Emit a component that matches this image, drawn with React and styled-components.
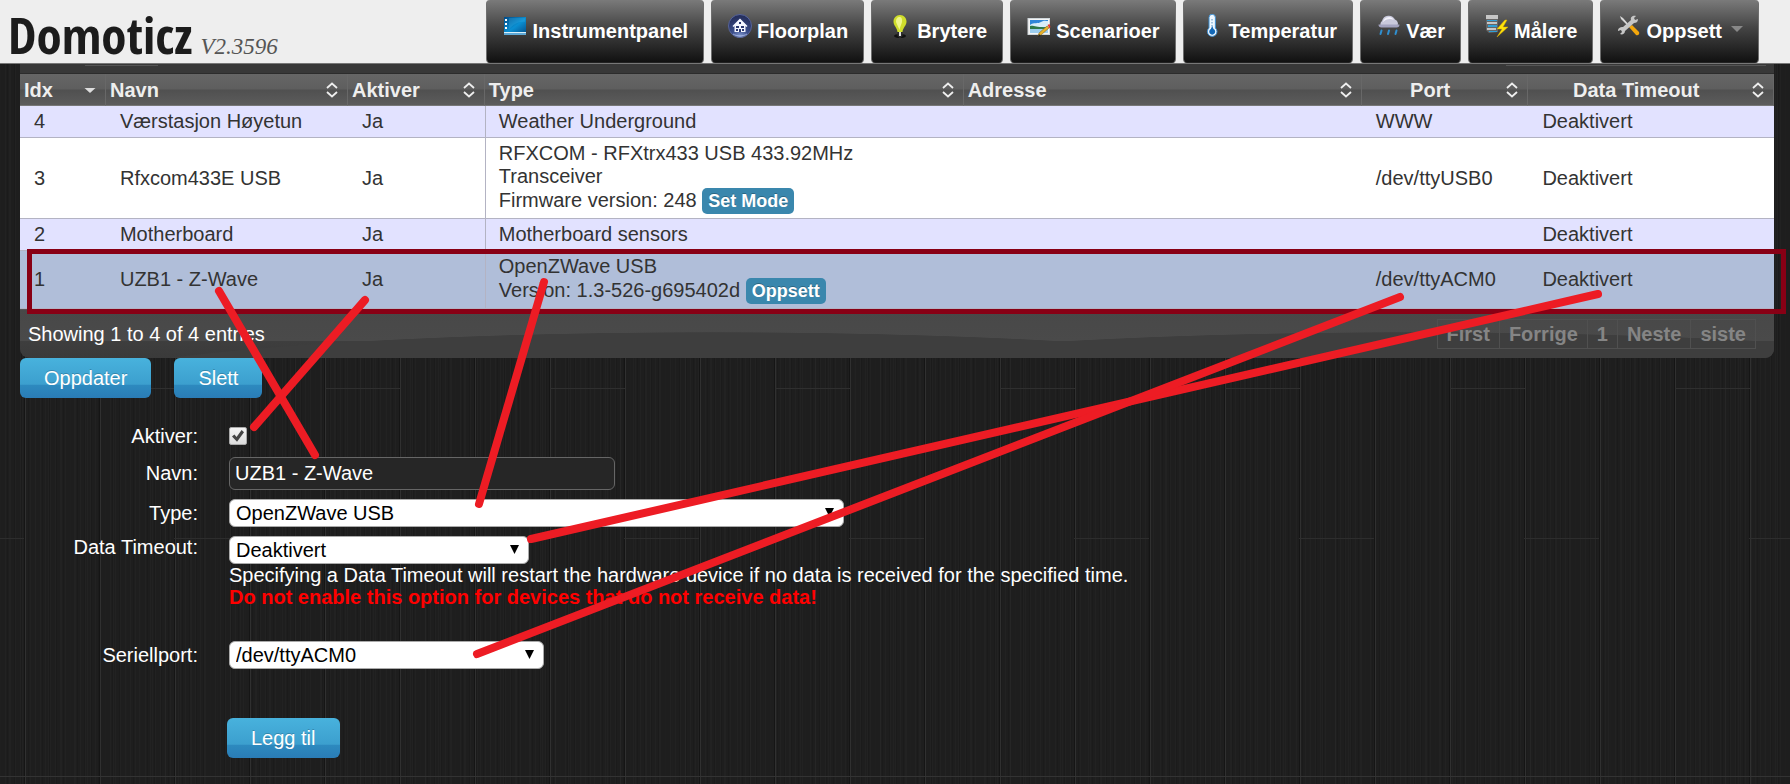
import React, { Component } from 'react'
import styled, { createGlobalStyle, css } from 'styled-components';

const GlobalStyle = createGlobalStyle`
  * {
    box-sizing: border-box;
  }
  body {
    margin: 0;
    color: #fff;
    font-family: "Liberation Sans", Arial, sans-serif;
    font-size: 20px;
    line-height: 23px;
    background-color: #1e1e1e;
    /* dark wood: plank ends, plank seams, grain */
    background-image:
      linear-gradient(90deg, transparent 100px, #2f2f2f 100px, #2f2f2f 175px, transparent 175px),
      linear-gradient(90deg, transparent 174px, #2d2d2d 174px),
      linear-gradient(90deg, #2d2d2d 24px, transparent 24px),
      repeating-linear-gradient(90deg, transparent 0, transparent 24px, #151515 24px, #151515 25px, #303030 25px, #303030 26px, transparent 26px, transparent 75px),
      repeating-linear-gradient(90deg, rgba(255, 255, 255, 0.02) 0, rgba(255, 255, 255, 0.02) 1px, transparent 1px, transparent 5px),
      repeating-linear-gradient(90deg, rgba(0, 0, 0, 0.1) 0, rgba(0, 0, 0, 0.1) 1px, transparent 1px, transparent 7px),
      repeating-linear-gradient(90deg, transparent 0, transparent 9px, rgba(255, 255, 255, 0.02) 9px, rgba(255, 255, 255, 0.02) 10px, transparent 10px, transparent 13px);
    background-size: 225px 1px, 225px 1px, 225px 1px, auto, auto, auto, auto;
    background-position: 0 388px, 0 538px, 0 538px, 0 0, 0 0, 0 0, 0 0;
    background-repeat: repeat-x, repeat-x, repeat-x, repeat, repeat, repeat, repeat;
  }
`;

const Page = styled.div`
  position: relative;
  min-height: 100vh;
`;

const Header = styled.header`
  display: flex;
  justify-content: space-between;
  height: 64px;
  padding: 0 31px 0 8px;
  background: #eee;
  border-bottom: 1px solid #777;
`;

const Brand = styled.a`
  display: flex;
  align-items: baseline;
  gap: 8px;
  color: #1c1c1c;
  text-decoration: none;
`;

const BrandName = styled.span`
  font-family: "Open Sans Condensed", "Roboto Condensed", sans-serif;
  font-size: 51px;
  font-weight: bold;
  line-height: 68px;
`;

const Version = styled.span`
  color: #555;
  font-family: "Liberation Serif", serif;
  font-size: 23px;
  font-style: italic;
`;

const Nav = styled.nav`
  display: flex;
  gap: 7px;
`;

const NavTab = styled.a`
  display: flex;
  align-items: baseline;
  gap: 5px;
  height: 63px;
  padding: 14px 15px 0 16px;
  border: 1px solid #6e6e6e;
  border-top: 0;
  border-bottom-color: #222;
  border-radius: 4px;
  background: linear-gradient(#7a7a7a, #444 45%, #111);
  color: #fff;
  font-weight: bold;
  text-decoration: none;
`;

const Caret = styled.span`
  align-self: flex-start;
  width: 12px;
  height: 6px;
  margin: 12px 0 0 4px;
  background: #888;
  clip-path: polygon(0 0, 100% 0, 50% 100%);
`;

const Main = styled.main`
  padding: 0 16px 0 20px;
`;

const PanelTop = styled.div`
  display: flex;
  justify-content: space-between;
  height: 10px;
  padding: 1px 8px 0 65px;
  background: #383838;
  border-bottom: 1px solid #2c2c2c;
`;

const Edge = styled.span`
  width: ${props => props.$wide ? '260px' : '73px'};
  height: 1px;
  background: #555;
`;

const Table = styled.table`
  width: 100%;
  table-layout: fixed;
  border-spacing: 0;
  color: #333;
`;

const Th = styled.th`
  height: 32px;
  padding: 1px 15px 0 4px;
  border-right: 1px solid #686868;
  border-bottom: 1px solid #777;
  background: linear-gradient(#666 0, #5e5e5e 48%, #505050 52%, #5c5c5c);
  color: #eee;
`;

const ThInner = styled.div`
  display: flex;
  align-items: center;
  justify-content: space-between;
  margin-right: -6px;
`;

const ThText = styled.span`
  flex: 1;
  text-align: ${props => props.$center ? 'center' : 'left'};
  padding-right: ${props => props.$center ? '12px' : '0'};
`;

const Row = styled.tr`
  background: ${props => props.$selected ? '#b0bed9' : props.$odd ? '#fff' : '#e2e2ff'};
`;

const Td = styled.td`
  padding: 4px 14px;
  border-bottom: 1px solid #b3b3c3;
  ${props => props.$divider && css`
    padding-left: 13px;
    border-left: 1px solid #b3b3c3;
  `}
`;

const Label = styled.button`
  padding: 3px 6px;
  border: 0;
  border-radius: 5px;
  background: #3a87ad;
  color: #fff;
  font: bold 18px/20px "Liberation Sans", Arial, sans-serif;
  text-shadow: 0 -1px 0 rgba(0, 0, 0, 0.25);
`;

const PanelBottom = styled.div`
  display: flex;
  align-items: center;
  justify-content: space-between;
  height: 49px;
  padding: 0 18px 0 8px;
  border-top: 1px solid #555;
  border-radius: 0 0 9px 9px;
  background:
    radial-gradient(664px 60px at 693px 82px, #3e3e3e 99%, transparent),
    radial-gradient(664px 60px at 1393px 82px, #3e3e3e 99%, transparent),
    linear-gradient(#484848, #4a4a4a 31px, #3e3e3e 31px, #3a3a3a);
`;

const Pager = styled.div`
  display: flex;
  border: 1px solid #505050;
`;

const PageButton = styled.button`
  height: 28px;
  padding: 0 9px;
  border: 0;
  border-left: 1px solid #505050;
  background: none;
  color: #858585;
  font: bold 20px/23px "Liberation Sans", Arial, sans-serif;

  &:first-child {
    border-left: 0;
  }
`;

const Button = styled.button`
  height: 40px;
  padding: 0 24px;
  border: 0;
  border-radius: 6px;
  background: linear-gradient(#48b2dd, #3c9fce 66%, #2d8abf 67%, #2a7cb6);
  color: #fff;
  font: 20px/23px "Liberation Sans", Arial, sans-serif;
  text-shadow: 0 -1px 0 rgba(0, 0, 0, 0.2);
`;

const Actions = styled.div`
  display: flex;
  gap: 23px;
`;

const Form = styled.form`
  display: grid;
  gap: 9px;
  padding-top: 26px;
`;

const Field = styled.div`
  display: grid;
  grid-template-columns: 178px 1fr;
  column-gap: 31px;
  align-items: ${props => props.$top ? 'start' : 'center'};
  margin-bottom: ${props => props.$last ? '40px' : '0'};
`;

const FieldLabel = styled.label`
  text-align: right;
`;

const Checkbox = styled.input`
  appearance: none;
  width: 18px;
  height: 18px;
  margin: 3px 0;
  border: 1px solid #aaa;
  border-radius: 2px;
  background: linear-gradient(#f4f4f4, #dcdcdc);

  &:checked::after {
    content: '';
    display: block;
    width: 12px;
    height: 12px;
    margin: 2px;
    background: #444;
    clip-path: polygon(0 55%, 20% 38%, 38% 58%, 80% 0, 100% 18%, 42% 98%);
  }
`;

const TextInput = styled.input`
  width: 386px;
  max-width: 100%;
  height: 33px;
  padding: 0 5px;
  border: 1px solid #666;
  border-radius: 6px;
  background: #262626;
  color: #fff;
  font: 20px/23px "Liberation Sans", Arial, sans-serif;
`;

const SelectBox = styled.div`
  position: relative;
  width: ${props => props.$width};
  max-width: 100%;
  height: 28px;

  &::after {
    content: '';
    position: absolute;
    top: 9px;
    right: 10px;
    width: 9px;
    height: 9px;
    background: #000;
    clip-path: polygon(0 0, 100% 0, 50% 100%);
    pointer-events: none;
  }
`;

const Select = styled.select`
  appearance: none;
  display: block;
  width: 100%;
  height: 28px;
  padding: 0 26px 0 6px;
  border: 1px solid #aaa;
  border-radius: 6px;
  background: #fff;
  color: #000;
  font: 20px/23px "Liberation Sans", Arial, sans-serif;
`;

const Help = styled.p`
  margin: 0 0 24px;
  line-height: 22px;
`;

const Warning = styled.strong`
  display: block;
  color: #f00;
`;

const Submit = styled.div`
  padding-left: 207px;
`;

const Rule = styled.hr`
  margin: 18px 0 0;
  border: 0;
  border-top: 1px solid #333;
`;

const Marks = styled.svg`
  position: absolute;
  top: 0;
  left: 0;
  width: 100%;
  height: 100%;
  pointer-events: none;
`;

const MarkBox = styled.rect`
  width: calc(100% - 36px);
  fill: none;
  stroke: #880015;
  stroke-width: 5px;
`;

const Icon = ({ children }) => (
  <svg width="24" height="24" viewBox="0 0 24 24" aria-hidden="true">{children}</svg>
)

const DashboardIcon = () => (
  <Icon>
    <defs>
      <linearGradient id="dash" x1="0" y1="0" x2="1" y2="1">
        <stop offset="0" stopColor="#034a86" />
        <stop offset="0.55" stopColor="#0a8fd2" />
        <stop offset="1" stopColor="#04528f" />
      </linearGradient>
    </defs>
    <rect x="1" y="3" width="22" height="16" fill="url(#dash)" />
    <rect x="1" y="18" width="22" height="1" fill="#d8f0fb" />
    <rect x="1" y="19" width="22" height="2" fill="#5fa9d6" />
    <path d="M2 5h2v2H2zM2 9h2v2H2zM2 13h2v2H2z" fill="#fff" />
    <path d="M6 4L22 4 22 8C16 7 11 10 6 15z" fill="#3fb8ec" opacity="0.25" />
  </Icon>
)

const FloorplanIcon = () => (
  <Icon>
    <defs>
      <radialGradient id="floor" cx="0.5" cy="1" r="0.9">
        <stop offset="0" stopColor="#8fa6dc" />
        <stop offset="0.4" stopColor="#3c4f8d" />
        <stop offset="1" stopColor="#26305e" />
      </radialGradient>
    </defs>
    <circle cx="12" cy="12" r="11.5" fill="url(#floor)" stroke="#58659a" />
    <path d="M4.500 12L12 4.500l7.500 7.500-1 1-1-1v6h-11v-6l-1 1z" fill="#f4f6ff" />
    <path d="M8 12h3v2H8zM13 12h3v2h-3zM8 15h2v2H8zM14 15h2v2h-2zM11 15h2v3h-2zM11 8h2v2h-2z" fill="#2b3870" />
    <path d="M5 20c4 2.500 10 2.500 14 0" stroke="#b8c6ee" strokeWidth="0.700" fill="none" />
  </Icon>
)

const BulbIcon = () => (
  <Icon>
    <ellipse cx="12" cy="22" rx="6" ry="2" fill="#111" />
    <path d="M12 1C8 1 5.500 4 5.500 7.500 5.500 12 9 13 9.500 18h5C15 13 18.500 12 18.500 7.500 18.500 4 16 1 12 1z" fill="#cfdd2b" />
    <path d="M12 3C9 3 8 5 8 8c1 3 2.500 5 3.500 8 1-5 3-7 2.500-10C14 4 13 3 12 3z" fill="#f0f68b" />
    <path d="M9.500 18h5v4l-2 2h-1l-2-2z" fill="#2b2b2b" />
    <path d="M11 18h2v4h-2z" fill="#ddd" />
  </Icon>
)

const ScenesIcon = () => (
  <Icon>
    <rect x="1" y="4.500" width="21.500" height="16" fill="#f5f5f5" stroke="#cfd6da" />
    <rect x="3" y="6" width="18" height="13" fill="#2f86d8" />
    <path d="M3 11c4-3 8-1 11-3s5-1 7-1v6H3z" fill="#d7edfa" />
    <path d="M3 12c4-1 7 2 18 1v2H3z" fill="#2f7a49" />
    <rect x="3" y="15" width="18" height="4" fill="#9ccdee" />
    <path d="M20 12l2 2-8 7-3 1 1-3z" fill="#e7b22b" stroke="#7a5a12" strokeWidth="0.500" />
    <path d="M20.500 11l2-1 1 3-1 1.500z" fill="#e23b2e" />
    <path d="M11 23l1-3 2 2z" fill="#222" />
  </Icon>
)

const TemperatureIcon = () => (
  <Icon>
    <path d="M9 3.500a3.200 3.200 0 0 1 6.400 0V14a4.800 4.800 0 1 1-6.400 0z" fill="#eef7ff" stroke="#3f8fd0" />
    <path d="M12 5v13" stroke="#8ab4d6" strokeWidth="1.500" strokeDasharray="1.500 1.500" />
    <path d="M12.200 12l1.300 3a3 3 0 1 1-2.600 0z" fill="#1268b8" />
  </Icon>
)

const RainIcon = () => (
  <Icon>
    <path d="M4.500 13a4 4 0 0 1 .5-6 7 7 0 0 1 13-1.500 4.500 4.500 0 0 1 1.500 7.500z" fill="#c9c9dc" />
    <path d="M6 8a6 6 0 0 1 11-2c-4-2-8-1-11 2z" fill="#f2f2fa" />
    <path d="M1.500 10.500h21c0 2-1 3-3 3h-15c-2 0-3-1-3-3z" fill="#a3a3c0" />
    <path d="M4.500 16.500L3.500 20M12 16.500L11 20M19.500 16.500l-1 3.500" stroke="#2f8fd0" strokeWidth="2" strokeLinecap="round" />
  </Icon>
)

const MetersIcon = () => (
  <Icon>
    <path d="M1 1h12v17l-9 1-3-3z" fill="#666" />
    <path d="M1 1h12v4H1zM2 8h10v2H2zM2 14h9v2H2z" fill="#c6c6c6" />
    <path d="M2 6h10v1H2zM3 11h9v2H3zM4 17h8v1H4z" fill="#2f9fd6" />
    <path d="M20 6l-8 9h5l-5 8 11-10h-5l4-7z" fill="#ffe40a" stroke="#d8a800" strokeWidth="0.500" />
  </Icon>
)

const SetupIcon = () => (
  <Icon>
    <path d="M3 2l3 2 7 8-1 1-8-8z" fill="#d8d8d8" />
    <path d="M12 13l3-2 7 7c1 2-1 4-3 3z" fill="#f4a70c" />
    <path d="M19 2l-2 2 1 2 3-1c0 3-2 4-4 4L8 17c0 3-3 4-5 3l2-2-1-2-3 1c0-3 2-4 5-4l8-7c-1-3 2-5 5-4z" fill="#c6c6c6" />
  </Icon>
)

const SortIcon = ({ desc }) => (
  <svg width="12" height="16" viewBox="0 0 12 16" aria-hidden="true">
    {desc
      ? <path d="M0.500 6h11L6 11z" fill="#ddd" />
      : <path d="M1 6L6 1.500 11 6M1 10L6 14.500 11 10" fill="none" stroke="#eee" strokeWidth="1.800" />}
  </svg>
)

const tabs = [
  { name: 'Instrumentpanel', icon: DashboardIcon },
  { name: 'Floorplan', icon: FloorplanIcon },
  { name: 'Brytere', icon: BulbIcon },
  { name: 'Scenarioer', icon: ScenesIcon },
  { name: 'Temperatur', icon: TemperatureIcon },
  { name: 'Vær', icon: RainIcon },
  { name: 'Målere', icon: MetersIcon },
  { name: 'Oppsett', icon: SetupIcon, menu: true },
]

const columns = [
  { name: 'Idx', width: '4.9%', desc: true },
  { name: 'Navn', width: '13.8%' },
  { name: 'Aktiver', width: '7.8%' },
  { name: 'Type', width: '27.3%' },
  { name: 'Adresse', width: '22.7%' },
  { name: 'Port', width: '9.5%', center: true },
  { name: 'Data Timeout', width: '14%', center: true },
]

const hardware = [
  { idx: 4, name: 'Værstasjon Høyetun', type: ['Weather Underground'], port: 'WWW' },
  { idx: 3, name: 'Rfxcom433E USB', type: ['RFXCOM - RFXtrx433 USB 433.92MHz', 'Transceiver', 'Firmware version: 248'], action: 'Set Mode', port: '/dev/ttyUSB0' },
  { idx: 2, name: 'Motherboard', type: ['Motherboard sensors'], port: '' },
  { idx: 1, name: 'UZB1 - Z-Wave', type: ['OpenZWave USB', 'Version: 1.3-526-g695402d'], action: 'Oppsett', port: '/dev/ttyACM0' },
]

// which table cell ends up in which form field
const links = [
  [219, 291, 315, 455],
  [365, 300, 254, 427],
  [544, 282, 479, 504],
  [1598, 294, 531, 539],
  [1400, 297, 477, 654],
]

export default class App extends Component {
  constructor() {
    super();
    this.state = {
      selected: 1,
      enabled: true,
      name: 'UZB1 - Z-Wave'
    }
    this.selectRow = this.selectRow.bind(this)
  }

  selectRow(item) {
    this.setState({ selected: item.idx, name: item.name })
  }

  render() {
    const { selected, enabled, name } = this.state
    return (
      <Page>
        <GlobalStyle />
        <Header>
          <Brand href="#/Dashboard">
            <BrandName>Domoticz</BrandName>
            <Version>V2.3596</Version>
          </Brand>
          <Nav>
            {tabs.map(tab => (
              <NavTab key={tab.name} href="#!">
                <tab.icon />
                <span>{tab.name}</span>
                {tab.menu && <Caret />}
              </NavTab>
            ))}
          </Nav>
        </Header>
        <Main>
          <PanelTop>
            <Edge />
            <Edge $wide />
          </PanelTop>
          <Table>
            <colgroup>
              {columns.map(col => <col key={col.name} width={col.width} />)}
            </colgroup>
            <thead>
              <tr>
                {columns.map(col => (
                  <Th key={col.name} scope="col">
                    <ThInner>
                      <ThText $center={col.center}>{col.name}</ThText>
                      <SortIcon desc={col.desc} />
                    </ThInner>
                  </Th>
                ))}
              </tr>
            </thead>
            <tbody>
              {hardware.map((item, i) => (
                <Row key={item.idx} $odd={i % 2 === 1} $selected={item.idx === selected} onClick={() => this.selectRow(item)}>
                  <Td>{item.idx}</Td>
                  <Td>{item.name}</Td>
                  <Td>Ja</Td>
                  <Td $divider>
                    {item.type.map((line, n) => (
                      <React.Fragment key={line}>
                        {n > 0 && <br />}
                        {line}
                      </React.Fragment>
                    ))}
                    {item.action && <> <Label type="button">{item.action}</Label></>}
                  </Td>
                  <Td></Td>
                  <Td>{item.port}</Td>
                  <Td>Deaktivert</Td>
                </Row>
              ))}
            </tbody>
          </Table>
          <PanelBottom>
            <span>Showing 1 to 4 of 4 entries</span>
            <Pager>
              {['First', 'Forrige', '1', 'Neste', 'siste'].map(page => (
                <PageButton key={page} type="button">{page}</PageButton>
              ))}
            </Pager>
          </PanelBottom>
          <Actions>
            <Button type="button">Oppdater</Button>
            <Button type="button">Slett</Button>
          </Actions>
          <Form onSubmit={e => e.preventDefault()}>
            <Field>
              <FieldLabel htmlFor="enabled">Aktiver:</FieldLabel>
              <Checkbox
                id="enabled"
                type="checkbox"
                checked={enabled}
                onChange={e => this.setState({ enabled: e.target.checked })}
              />
            </Field>
            <Field>
              <FieldLabel htmlFor="name">Navn:</FieldLabel>
              <TextInput id="name" type="text" value={name} onChange={e => this.setState({ name: e.target.value })} />
            </Field>
            <Field>
              <FieldLabel htmlFor="type">Type:</FieldLabel>
              <SelectBox $width="615px">
                <Select id="type">
                  <option>OpenZWave USB</option>
                </Select>
              </SelectBox>
            </Field>
            <Field $top>
              <FieldLabel htmlFor="timeout">Data Timeout:</FieldLabel>
              <div>
                <SelectBox $width="300px">
                  <Select id="timeout">
                    <option>Deaktivert</option>
                  </Select>
                </SelectBox>
                <Help>
                  Specifying a Data Timeout will restart the hardware device if no data is received for the specified time.
                  <Warning>Do not enable this option for devices that do not receive data!</Warning>
                </Help>
              </div>
            </Field>
            <Field $last>
              <FieldLabel htmlFor="port">Seriellport:</FieldLabel>
              <SelectBox $width="315px">
                <Select id="port">
                  <option>/dev/ttyACM0</option>
                </Select>
              </SelectBox>
            </Field>
            <Submit>
              <Button type="submit">Legg til</Button>
            </Submit>
          </Form>
        </Main>
        <Rule />
        <Marks aria-hidden="true">
          <MarkBox x="29.500" y="251.500" height="60" />
          {links.map(([x1, y1, x2, y2]) => (
            <line key={x1} x1={x1} y1={y1} x2={x2} y2={y2} stroke="#ed1c24" strokeWidth="8" strokeLinecap="round" />
          ))}
        </Marks>
      </Page>
    )
  }
}
